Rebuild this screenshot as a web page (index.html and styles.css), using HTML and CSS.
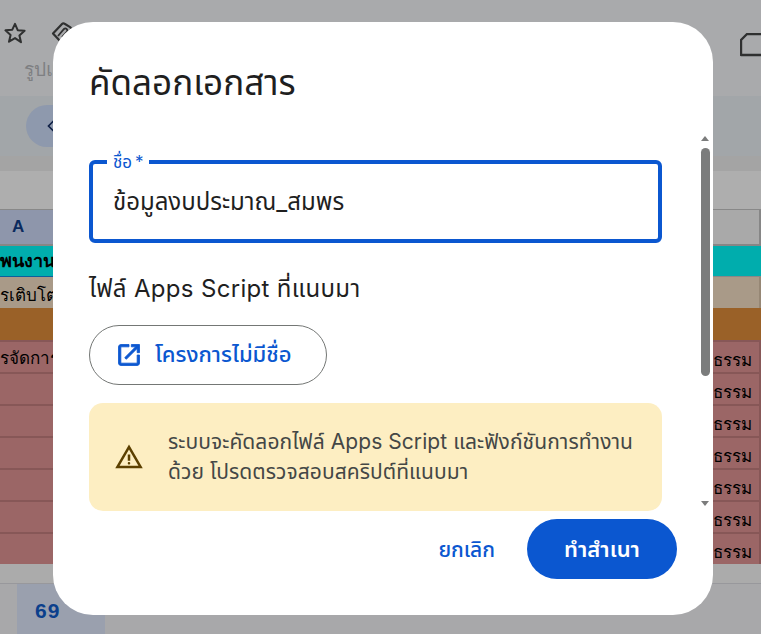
FILE: index.html
```html
<!DOCTYPE html>
<html lang="th">
<head>
<meta charset="utf-8">
<title>คัดลอกเอกสาร</title>
<link rel="stylesheet" href="styles.css">
</head>
<body>
<div class="sheet">
  <header class="topbar">
    <div class="title-icons">
      <svg class="star" viewBox="0 0 24 24" width="24" height="24"><path d="M12 2.8l2.7 6.4 6.9.6-5.2 4.6 1.6 6.8L12 17.1l-6 3.6 1.6-6.8-5.2-4.6 6.9-.6z" fill="none" stroke="#2f3030" stroke-width="2" stroke-linejoin="round"/></svg>
      <svg class="tag" viewBox="0 0 24 24" width="24" height="24"><path d="M3 12.5L12 3a2 2 0 0 1 2.6-.3l5.5 3.4a2 2 0 0 1 .6 2.8L11 21z" fill="none" stroke="#2f3030" stroke-width="2.2" stroke-linejoin="round"/><path d="M8 15l6-7a2 2 0 0 1 3 2.6L12 16" fill="none" stroke="#2f3030" stroke-width="1.8"/></svg>
    </div>
    <div class="menu-line"><span class="menu-word">รูปแบบ</span></div>
    <svg class="cloud" viewBox="0 0 24 24" width="24" height="24"><path d="M24 1H7L1 7v15h23" fill="none" stroke="#2f3030" stroke-width="2.4" stroke-linejoin="round"/></svg>
  </header>
  <div class="toolbar"><div class="pill"><svg viewBox="0 0 12 16" width="10" height="14"><path d="M9 2L3 8l6 6" fill="none" stroke="#0e1f45" stroke-width="2"/></svg></div></div>
  <div class="strip"></div>
  <div class="formula"></div>
  <div class="colhead"><span class="col-a">A</span><span class="col-end"></span></div>
  <div class="row teal"><b>พนงาน</b></div>
  <div class="row tan"><span>รเติบโต</span></div>
  <div class="row orange"></div>
  <div class="row red"><span>รจัดการ</span><span class="cut">ธรรม</span></div>
  <div class="row red"><span></span><span class="cut">ธรรม</span></div>
  <div class="row red"><span></span><span class="cut">ธรรม</span></div>
  <div class="row red"><span></span><span class="cut">ธรรม</span></div>
  <div class="row red"><span></span><span class="cut">ธรรม</span></div>
  <div class="row red"><span></span><span class="cut">ธรรม</span></div>
  <div class="row red"><span></span><span class="cut">ธรรม</span></div>
  <div class="foot-gap"></div>
  <div class="tabs"><div class="tab"><b>69</b></div></div>
</div>

<div class="dialog" role="dialog">
  <h1 class="d-title">คัดลอกเอกสาร</h1>
  <div class="d-body">
    <div class="field">
      <span class="f-label">ชื่อ *</span>
      <span class="f-value">ข้อมูลงบประมาณ_สมพร</span>
    </div>
    <h2 class="sub">ไฟล์ Apps Script ที่แนบมา</h2>
    <a class="link-btn">
      <svg viewBox="0 0 24 24" width="28" height="28"><path d="M5 21c-.55 0-1.02-.2-1.41-.59C3.2 20.02 3 19.55 3 19V5c0-.55.2-1.02.59-1.41C3.98 3.2 4.45 3 5 3h7v2H5v14h14v-7h2v7c0 .55-.2 1.02-.59 1.41-.39.39-.86.59-1.41.59H5zm4.7-5.3l-1.4-1.4L17.6 5H14V3h7v7h-2V6.4l-9.3 9.3z" fill="#0b57d0" stroke="#0b57d0" stroke-width=".7"/></svg>
      <span>โครงการไม่มีชื่อ</span>
    </a>
    <div class="notice">
      <svg viewBox="0 0 24 24" width="30" height="30"><path d="M1 21L12 2l11 19H1zm3.45-2h15.1L12 6 4.45 19zM12 18c.28 0 .52-.1.71-.29.19-.19.29-.43.29-.71s-.1-.52-.29-.71A.97.97 0 0 0 12 16c-.28 0-.52.1-.71.29-.19.19-.29.43-.29.71s.1.52.29.71c.19.19.43.29.71.29zm-1-3h2v-5h-2v5z" fill="#5c4000"/></svg>
      <p>ระบบจะคัดลอกไฟล์ Apps Script และฟังก์ชันการทำงาน<br>ด้วย โปรดตรวจสอบสคริปต์ที่แนบมา</p>
    </div>
  </div>
  <div class="actions">
    <a class="cancel">ยกเลิก</a>
    <a class="primary">ทำสำเนา</a>
  </div>
  <div class="sb-up"></div>
  <div class="sb-thumb"></div>
  <div class="sb-down"></div>
</div>
</body>
</html>
```
FILE: styles.css
```css
* { box-sizing: border-box; }
html, body { margin: 0; height: 100%; overflow: hidden; }
body { width: 761px; height: 634px; position: relative; font-family: "Inter", "Noto Sans", "Noto Sans Thai", sans-serif; background: #a9a9ab; }

.sheet { display: flex; flex-direction: column; height: 634px; overflow: hidden; font-family: "Liberation Sans", "Noto Sans", sans-serif; }
.topbar { height: 96px; background: #a9aaac; padding: 21px 0 0 3px; position: relative; }
.title-icons { display: flex; gap: 23px; height: 24px; }
.menu-line { margin-top: 9px; padding-left: 21px; height: 26px; font-size: 19px; color: #7e7f82; white-space: nowrap; }
.cloud { position: absolute; left: 740px; top: 33px; }
.toolbar { height: 60px; background: #a2a6a9; padding: 9px 0 0 26px; }
.pill { width: 120px; height: 42px; border-radius: 21px; background: #8e99ad; display: flex; align-items: center; padding-left: 20px; }
.strip { height: 15px; background: #a4a4a4; }
.formula { height: 38px; background: #aeaeae; }
.colhead { height: 37px; background: #a9a9a9; border-top: 1px solid #888; border-bottom: 2px solid #868686; display: flex; justify-content: space-between; }
.col-a { width: 53px; background: #8e96ab; color: #0b2a5e; font-weight: 700; font-size: 17px; text-align: left; padding: 7px 0 0 12px; }
.col-end { width: 2px; background: #868686; }
.row { height: 32px; display: flex; justify-content: space-between; align-items: center; font-size: 17px; color: #000; white-space: nowrap; overflow: hidden; border-right: 2px solid #875757; }
.teal { height: 31px; font-size: 18px; border-right: 0; padding-bottom: 3px; background: linear-gradient(#00adad, #00adad) top / 100% 30px no-repeat, linear-gradient(to right, #0e5f9b 53px, #888 53px); }
.tan { height: 31px; background: #a99a88; border-right-color: #968775; align-items: flex-start; padding-top: 4px; }
.orange { background: #9a6128; border: 0; }
.red { background: #9b6666; border-top: 2px solid #875757; padding-top: 1px; }
.cut { width: 47px; font-size: 17px; padding-left: 1px; padding-top: 3px; }
.foot-gap { height: 20px; background: #ababab; border-bottom: 1px solid #98989c; }
.tabs { flex: 1; background: #a8a8aa; padding-left: 17px; }
.tab { width: 88px; height: 100%; background: #9aa0ae; color: #0b3f8c; font-size: 21px; letter-spacing: 1px; padding: 15px 0 0 18px; }

.dialog { position: absolute; left: 53px; top: 22px; width: 660px; height: 593px; background: #fff; border-radius: 40px; padding: 0 51px 0 36px; display: flex; flex-direction: column; color: #1f1f1f; }
.d-title { margin: 36px 0 0; height: 48px; font-size: 35px; line-height: 48px; font-weight: 400; }
.d-body { display: flex; flex-direction: column; padding-top: 54px; flex: 1; }
.field { position: relative; height: 83px; border: 4px solid #0b57d0; border-radius: 6px; padding: 23px 20px 0; font-size: 24px; line-height: 30px; }
.f-label { position: absolute; left: 14px; top: -12px; padding: 0 6px; background: #fff; color: #0b57d0; font-size: 17px; line-height: 20px; word-spacing: -2px; }
.f-value { display: block; }
.sub { margin: 29px 0 0; height: 34px; font-size: 24px; line-height: 34px; font-weight: 400; letter-spacing: .32px; }
.link-btn { margin-top: 19px; width: 238px; height: 60px; border: 1px solid #747775; border-radius: 30px; display: flex; align-items: center; gap: 12px; padding-left: 25px; color: #0b57d0; font-size: 22px; font-weight: 500; }
.notice { margin-top: 18px; height: 108px; background: #fdeec2; border-radius: 14px; display: flex; align-items: center; padding: 0 24px 0 25px; gap: 24px; }
.notice p { margin: 0; font-size: 21px; line-height: 30px; color: #444746; white-space: nowrap; letter-spacing: .07px; }
.actions { display: flex; justify-content: flex-end; align-items: center; gap: 32px; margin-right: -15px; padding-bottom: 36px; }
.cancel { color: #0b57d0; font-size: 21px; font-weight: 500; padding-top: 2px; }
.primary { width: 150px; height: 60px; border-radius: 30px; background: #0b57d0; color: #fff; font-size: 22px; font-weight: 600; display: flex; align-items: center; justify-content: center; padding-top: 2px; }

.sb-up, .sb-down { position: absolute; left: 648px; width: 0; height: 0; border-left: 4.5px solid transparent; border-right: 4.5px solid transparent; }
.sb-up { top: 114px; border-bottom: 5px solid #7b7c7c; }
.sb-down { top: 479px; border-top: 5px solid #7b7c7c; }
.sb-thumb { position: absolute; left: 648px; top: 126px; width: 9px; height: 228px; border-radius: 5px; background: #7b7c7c; }
```
